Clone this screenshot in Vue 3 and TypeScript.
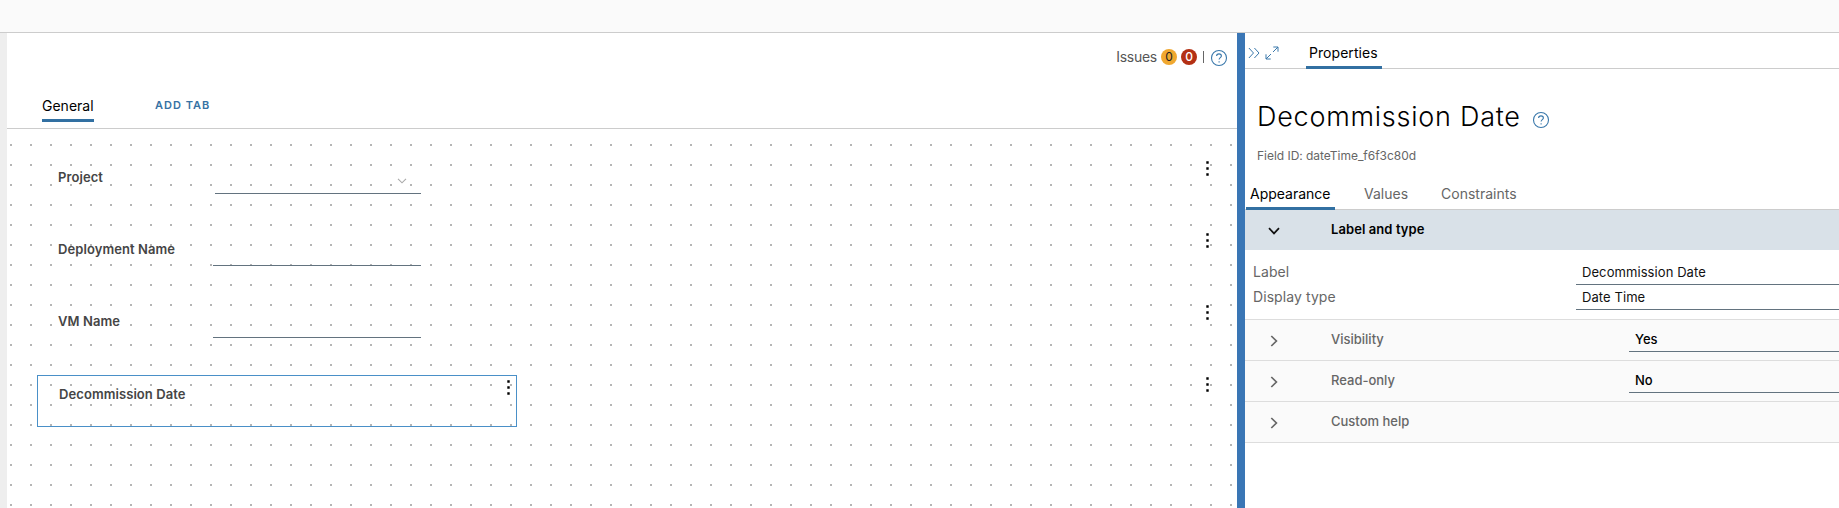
<script setup lang="ts">
interface Field { label: string; kind: 'select' | 'input' | 'date' }
interface Section { title: string; value?: string }

const fields: Field[] = [
  { label: 'Project', kind: 'select' },
  { label: 'Deployment Name', kind: 'input' },
  { label: 'VM Name', kind: 'input' },
  { label: 'Decommission Date', kind: 'date' },
]
const sections: Section[] = [
  { title: 'Visibility', value: 'Yes' },
  { title: 'Read-only', value: 'No' },
  { title: 'Custom help' },
]
</script>

<template>
  <div class="app">
    <header class="topbar"></header>
    <div class="body">
      <div class="gutter"></div>
      <main class="designer">
        <div class="issues">
          <span class="issues-label">Issues</span>
          <span class="badge warn">0</span>
          <span class="badge error">0</span>
          <span class="bar"></span>
          <svg class="help" viewBox="0 0 18 18"><circle cx="9" cy="9" r="7.5" /><path d="M6.6 7.1C6.6 5.7 7.6 4.9 9 4.9s2.4.8 2.4 2.1c0 1.6-2.3 1.8-2.3 3.6" /><path d="M9.1 12.2v1.2" /></svg>
        </div>
        <nav class="tabs">
          <span class="tab">General</span>
          <span class="add">ADD TAB</span>
        </nav>
        <section class="canvas">
          <div v-for="f in fields" :key="f.label" class="row">
            <div class="cell" :class="f.kind">
              <span class="name">{{ f.label }}</span>
              <span v-if="f.kind !== 'date'" class="control">
                <svg v-if="f.kind === 'select'" class="caret" viewBox="0 0 10 6"><path d="M1 .8 5 4.8 9 .8" /></svg>
              </span>
              <svg v-else class="kebab" viewBox="0 0 3 15"><path d="M.3.3h2.4v2.4H.3zM.3 6.3h2.4v2.4H.3zM.3 12.3h2.4v2.4H.3z" /></svg>
            </div>
            <svg class="kebab" viewBox="0 0 3 15"><path d="M.3.3h2.4v2.4H.3zM.3 6.3h2.4v2.4H.3zM.3 12.3h2.4v2.4H.3z" /></svg>
          </div>
        </section>
      </main>
      <div class="divider"></div>
      <aside class="props">
        <div class="props-bar">
          <svg class="collapse" viewBox="0 0 12 12"><path d="M.9 1 5.5 6 .9 11M6.4 1 11 6 6.4 11" /></svg>
          <svg class="expand" viewBox="0 0 14 14"><path d="M8.3 1H13v4.7M13 1 8 6M5.7 13H1V8.3M1 13l5-5" /></svg>
          <span class="props-tab">Properties</span>
        </div>
        <div class="heading">
          <h1>Decommission Date</h1>
          <svg class="help" viewBox="0 0 18 18"><circle cx="9" cy="9" r="7.5" /><path d="M6.6 7.1C6.6 5.7 7.6 4.9 9 4.9s2.4.8 2.4 2.1c0 1.6-2.3 1.8-2.3 3.6" /><path d="M9.1 12.2v1.2" /></svg>
        </div>
        <p class="field-id">Field ID: dateTime_f6f3c80d</p>
        <nav class="subtabs">
          <span class="subtab active">Appearance</span>
          <span class="subtab values">Values</span>
          <span class="subtab constraints">Constraints</span>
        </nav>
        <div class="acc-head">
          <svg class="chev down" viewBox="0 0 12 12"><path d="M1 3.2 6 8.4l5-5.2" /></svg>
          <span class="acc-title">Label and type</span>
        </div>
        <div class="details">
          <div class="detail"><span class="key">Label</span><span class="val">Decommission Date</span></div>
          <div class="detail"><span class="key">Display type</span><span class="val">Date Time</span></div>
        </div>
        <div v-for="s in sections" :key="s.title" class="acc-row">
          <svg class="chev" viewBox="0 0 12 12"><path d="M3.3 1 8.4 6l-5.1 5" /></svg>
          <span class="acc-title">{{ s.title }}</span>
          <span v-if="s.value" class="sel">{{ s.value }}</span>
        </div>
      </aside>
    </div>
  </div>
</template>

<style>
body { margin: 0; overflow: hidden; }
</style>

<style scoped>
.app { width: 1839px; height: 508px; overflow: hidden; display: flex; flex-direction: column; background: #fff; font-family: Inter, "Liberation Sans", sans-serif; font-size: 14px; line-height: 20px; color: #000; white-space: nowrap; }
.app * { box-sizing: border-box; }
svg { display: block; flex: none; fill: none; }
.topbar { height: 33px; flex: none; background: #fafafa; border-bottom: 1px solid #ccc; }
.body { flex: 1; display: flex; min-height: 0; }
.gutter { width: 7px; flex: none; background: #eee; }
.designer { width: 1230px; flex: none; display: flex; flex-direction: column; }
.issues { height: 48px; display: flex; align-items: center; justify-content: flex-end; padding-right: 9px; color: #565656; }
.issues-label { margin-right: 4px; letter-spacing: -.25px; }
.badge { width: 16px; height: 16px; border-radius: 8px; font-size: 12px; line-height: 16px; text-align: center; margin-right: 4px; }
.warn { background: #f0a830; color: #222; }
.error { background: #b43014; color: #fff; font-weight: 500; }
.bar { width: 1px; height: 12px; background: #666; margin: 0 6px 0 2px; }
.help { width: 18px; height: 18px; stroke: #3a78ab; stroke-width: 1.1; margin-top: 2px; }
.tabs { height: 48px; border-bottom: 1px solid #ccc; display: flex; padding-left: 35px; align-items: flex-start; }
.tab { margin-top: 15px; height: 26px; width: 52px; border-bottom: 3px solid #3270a2; }
.add { margin: 14px 0 0 61px; font-size: 11px; font-weight: 600; letter-spacing: 1px; color: #3672a4; }
.canvas { flex: 1; padding-top: 12px; background: conic-gradient(from 90deg at 18px 18px, #b5b5b5 25%, transparent 0) -15px -3px / 20px 20px; }
.row { height: 72px; display: flex; align-items: flex-start; padding: 0 28px 0 30px; }
.kebab { width: 3px; height: 15px; fill: #000; }
.row > .kebab { margin: 20px 0 0 auto; }
.cell { width: 480px; height: 52px; border: 1px solid transparent; display: flex; align-items: flex-start; padding-left: 20px; }
.name { margin-top: 25px; font-size: 13px; font-weight: 600; color: #454545; letter-spacing: .08px; }
.control { height: 20px; width: 208px; border-bottom: 1px solid #63737f; margin: 32px 95px 0 auto; }
.select .control { width: 206px; }
.caret { width: 10px; height: 6px; margin: 4px 0 0 182px; stroke: #aaa; stroke-width: 1.1; }
.date { margin-top: 18px; border-color: #4a90c8; padding-left: 21px; }
.date .name { margin-top: 8px; }
.date .kebab { margin: 4px 6px 0 auto; }
.divider { width: 8px; flex: none; background: #3a76b5; }
.props { flex: 1; min-width: 0; }
.props-bar { height: 36px; border-bottom: 1px solid #ccc; display: flex; padding-left: 3px; }
.collapse { width: 12px; height: 12px; margin-top: 14px; stroke: #3a78ab; }
.expand { width: 14px; height: 14px; margin: 13px 0 0 5px; stroke: #3a78ab; }
.props-tab { width: 76px; height: 36px; margin-left: 27px; padding: 10px 0 0 3px; border-bottom: 3px solid #3270a2; letter-spacing: .05px; }
.heading { height: 62px; display: flex; align-items: flex-start; padding: 31px 0 0 12px; }
h1 { margin: 0; font-size: 27px; line-height: 34px; font-weight: 300; letter-spacing: .75px; }
.heading .help { margin: 11px 0 0 11px; }
.field-id { margin: 15px 0 0 12px; font-size: 12px; color: #666; letter-spacing: -.03px; }
.subtabs { height: 44px; border-bottom: 1px solid #ccc; display: flex; align-items: flex-end; color: #666; padding-left: 1px; }
.subtab { height: 26px; margin-bottom: -1px; }
.active { width: 89px; padding-left: 4px; color: #000; border-bottom: 3px solid #3270a2; }
.values { margin-left: 29px; }
.constraints { margin-left: 33px; }
.acc-head { height: 40px; background: #d9e1e8; display: flex; align-items: center; font-weight: 600; font-size: 13px; letter-spacing: .08px; }
.chev { width: 12px; height: 12px; margin: 2px 0 0 23px; stroke: #666; stroke-width: 1.7; }
.down { stroke: #111; }
.acc-title { margin: -2px 0 0 51px; }
.details { height: 70px; border-bottom: 1px solid #ddd; padding-top: 10px; }
.detail { height: 25px; display: flex; color: #666; padding-left: 8px; letter-spacing: .08px; }
.key { margin-top: 2px; }
.val { margin-left: auto; width: 263px; border-bottom: 1px solid #63737f; padding: 2px 0 0 6px; color: #111; font-size: 13px; }
.acc-row { height: 41px; background: #fafafa; border-bottom: 1px solid #ddd; display: flex; align-items: center; font-size: 13px; font-weight: 500; color: #666; }
.sel { align-self: flex-start; width: 210px; height: 24px; margin: 8px 0 0 auto; padding: 1px 0 0 6px; border-bottom: 1px solid #63737f; color: #000; }
</style>
